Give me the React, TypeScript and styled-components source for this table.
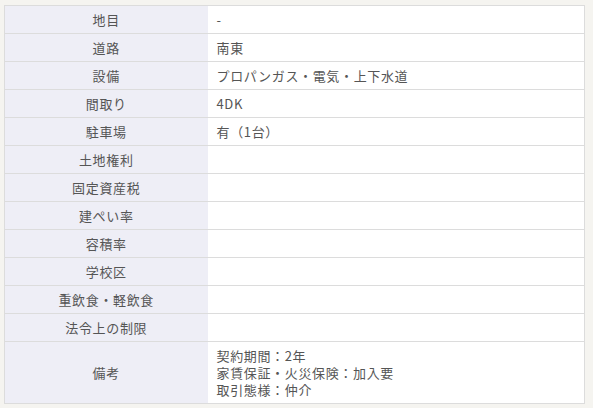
import React from "react";
import styled, { createGlobalStyle } from "styled-components";

const Global = createGlobalStyle`
  html, body { margin: 0; padding: 0; background: #f5f4f0; }
  body { font-family: "Noto Sans CJK JP", "Noto Sans", sans-serif; }
`;

const Page = styled.div`
  padding: 5px 8px 5px 4px;
  background: #f5f4f0;
`;

const Table = styled.table`
  width: 581px;
  table-layout: fixed;
  border-collapse: collapse;
  border: 1px solid #dcdcdc;
  font-size: 13px;
  line-height: 17px;
  color: #555;
  letter-spacing: 0.05em;
`;

const LabelCol = styled.col`
  width: 203px;
`;

const Row = styled.tr`
  border-bottom: 1px solid #dcdcdc;
`;

const Label = styled.th`
  background: #eeeef6;
  font-weight: normal;
  text-align: center;
  padding: 5px 8px;
  vertical-align: middle;
`;

const Value = styled.td`
  background: #fff;
  padding: 5px 9px;
  text-align: left;
  vertical-align: middle;
`;

const Line = styled.div`
  min-height: 17px;
`;

const rows: [string, string[]][] = [
  ["地目", ["-"]],
  ["道路", ["南東"]],
  ["設備", ["プロパンガス・電気・上下水道"]],
  ["間取り", ["4DK"]],
  ["駐車場", ["有（1台）"]],
  ["土地権利", [""]],
  ["固定資産税", [""]],
  ["建ぺい率", [""]],
  ["容積率", [""]],
  ["学校区", [""]],
  ["重飲食・軽飲食", [""]],
  ["法令上の制限", [""]],
  ["備考", ["契約期間：2年", "家賃保証・火災保険：加入要", "取引態様：仲介"]],
];

export default function App() {
  return (
    <>
      <Global />
      <Page>
        <Table>
          <colgroup>
            <LabelCol />
            <col />
          </colgroup>
          <tbody>
            {rows.map(([k, v]) => (
              <Row key={k}>
                <Label>{k}</Label>
                <Value>
                  {v.map((line, i) => (
                    <Line key={i}>{line}</Line>
                  ))}
                </Value>
              </Row>
            ))}
          </tbody>
        </Table>
      </Page>
    </>
  );
}
